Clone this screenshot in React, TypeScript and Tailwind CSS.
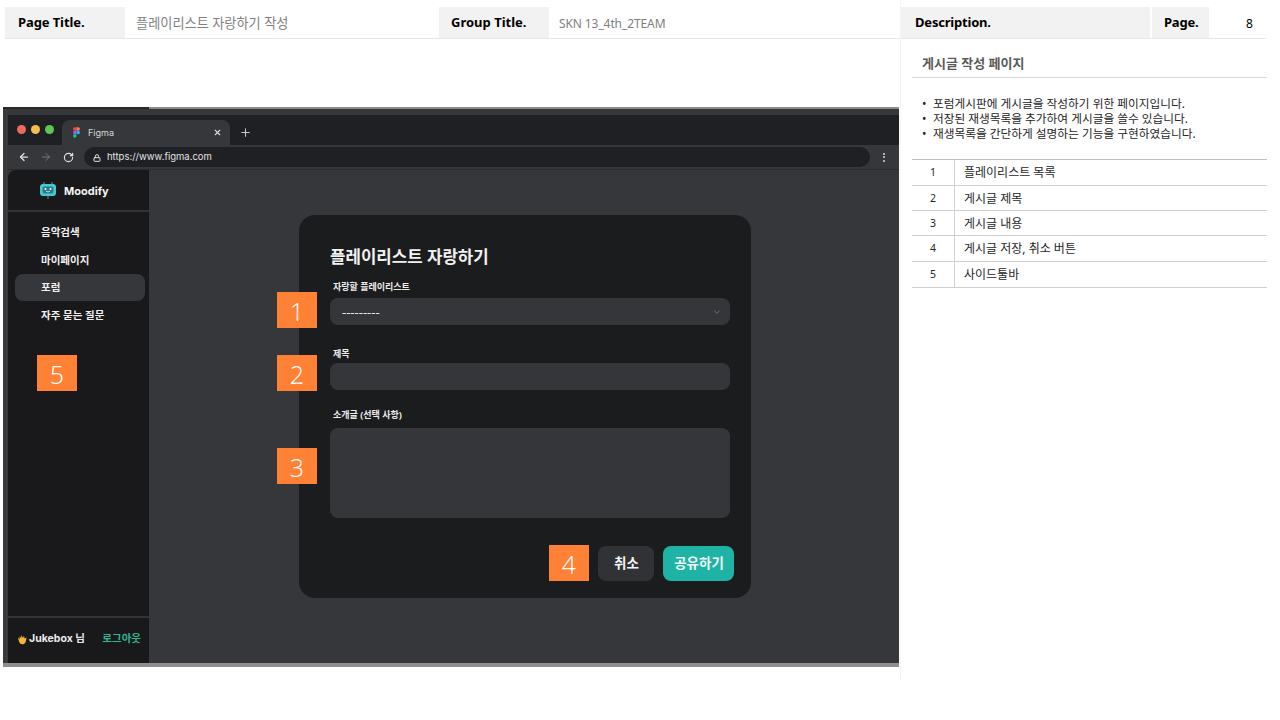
import { ArrowLeft, ArrowRight, ChevronDown, Lock, Plus, RotateCw, X } from 'lucide-react';

const rows = [
  { no: 1, text: '플레이리스트 목록', h: 'h-[26px]' },
  { no: 2, text: '게시글 제목', h: 'h-[25px]' },
  { no: 3, text: '게시글 내용', h: 'h-[25px]' },
  { no: 4, text: '게시글 저장, 취소 버튼', h: 'h-[26px]' },
  { no: 5, text: '사이드툴바', h: 'h-[26px]' },
];

const menus = ['음악검색', '마이페이지', '포럼', '자주 묻는 질문'];

const bullets = [
  '포럼게시판에 게시글을 작성하기 위한 페이지입니다.',
  '저장된 재생목록을 추가하여 게시글을 쓸수 있습니다.',
  '재생목록을 간단하게 설명하는 기능을 구현하였습니다.',
];

const Badge = ({ label, className }: { label: string; className: string }) => (
  <div className={`absolute w-10 h-9 bg-[#fe8135] text-[#fff7ef] text-[25px] font-light leading-[38px] text-center ${className}`}>
    {label}
  </div>
);

const FigmaIcon = () => (
  <svg width="7" height="11" viewBox="0 0 8 12">
    <path d="M4 0H2a2 2 0 0 0 0 4h2z" fill="#f24e1e" />
    <path d="M4 0h2a2 2 0 0 1 0 4H4z" fill="#ff7262" />
    <path d="M4 4H2a2 2 0 0 0 0 4h2z" fill="#a259ff" />
    <circle cx="6" cy="6" r="2" fill="#1abcfe" />
    <path d="M4 8H2a2 2 0 1 0 2 2z" fill="#0acf83" />
  </svg>
);

const RobotLogo = () => (
  <svg width="18" height="20" viewBox="0 0 18 20">
    <path d="M5 3V1M13 3V1" stroke="#3f8f96" strokeWidth="1.2" />
    <rect x="1" y="3" width="16" height="12" rx="3" fill="#4cc6d0" />
    <rect x="3.5" y="5.5" width="11" height="7" rx="2" fill="#2a7c86" />
    <circle cx="6.5" cy="8" r="1" fill="#e6fbfc" />
    <circle cx="11.5" cy="8" r="1" fill="#e6fbfc" />
    <path d="M7 10.3q2 1.2 4 0" stroke="#e6fbfc" strokeWidth="0.7" fill="none" />
    <path d="M9 15v3" stroke="#2f6d75" strokeWidth="1.6" />
  </svg>
);

const WaveHand = () => (
  <svg width="11" height="11" viewBox="0 0 11 11">
    <path d="M1 3.5 3 5 2.5 2 4.2 4 4.4 1 6 4 7 1.8 7.6 4.6 9.6 3.6 8.8 7.5Q8 10.500 5 10.300 2.800 10 2 7.500Z" fill="#f2b53c" />
  </svg>
);

const App = () => {
  return (
    <div className="relative w-[1280px] h-[720px] bg-white overflow-hidden flex font-['Noto_Sans','Noto_Sans_CJK_KR',sans-serif]">
      {/* left: header + captured screen */}
      <div className="w-[900px] shrink-0">
        <div className="flex h-[32px] mt-[7px] ml-[5px] border-b border-[#e8e8e8]">
          <div className="w-[120px] bg-[#f2f2f2] pl-[13px] text-[13px] font-bold tracking-[-0.1px] leading-[31px] text-black">Page Title.</div>
          <div className="w-[314px] pl-[11px] text-[13.200px] leading-[33px] text-[#7f7f7f]">플레이리스트 자랑하기 작성</div>
          <div className="w-[110px] bg-[#f2f2f2] pl-[12px] text-[13px] font-bold leading-[31px] text-black">Group Title.</div>
          <div className="flex-1 pl-[10px] text-[12px] tracking-[-0.1px] leading-[33px] text-[#7f7f7f]">SKN 13_4th_2TEAM</div>
        </div>

        <div className="ml-[3px] mt-[68px] w-[896px] h-[560px] flex flex-col bg-[#36373b] border-b-4 border-b-[#8f8f90]">
          <div className="h-[2px] flex shrink-0">
            <div className="w-[146px] bg-[#2a2a2b]" />
            <div className="flex-1 bg-[#8a8a8b]" />
          </div>
          <div className="flex-1 min-h-0 flex flex-col border-l-[5px] border-l-[#3a3a3c]">
            {/* tab strip */}
            <div className="h-[6px] bg-[#36373b]" />
            <div className="h-[30px] bg-[#1f2023] flex items-end">
              <div className="w-[54px] h-full flex items-center gap-[5px] pl-[9px] pb-[1px]">
                <span className="w-[9px] h-[9px] rounded-full bg-[#ee6a5f]" />
                <span className="w-[9px] h-[9px] rounded-full bg-[#f5bd4f]" />
                <span className="w-[9px] h-[9px] rounded-full bg-[#61c454]" />
              </div>
              <div className="w-[168px] h-[25px] bg-[#36373b] rounded-t-lg flex items-center pl-[11px] pr-[8px]">
                <FigmaIcon />
                <span className="ml-[8px] text-[9px] text-[#d8d8da] font-['Inter',sans-serif]">Figma</span>
                <X size={9} strokeWidth={3} className="ml-auto text-[#dcdcde]" />
              </div>
              <Plus size={13} className="ml-[9px] mb-[6px] text-[#c8c8ca]" />
            </div>
            {/* address bar */}
            <div className="h-[25px] bg-[#36373b] flex items-center pl-[10px] border-b border-[#2a2b2e]">
              <ArrowLeft size={12} strokeWidth={2.5} className="text-[#e2e2e4]" />
              <ArrowRight size={12} strokeWidth={2} className="ml-[10px] text-[#77787c]" />
              <RotateCw size={11} strokeWidth={2.5} className="ml-[11px] text-[#e2e2e4]" />
              <div className="ml-[10px] w-[786px] h-[20px] rounded-full bg-[#1f2023] flex items-center pl-[9px] pt-[1px]">
                <Lock size={8} strokeWidth={3} className="text-[#e2e2e4]" />
                <span className="ml-[6px] text-[9.500px] text-[#e2e2e4] font-['Inter',sans-serif]">https://www.figma.com</span>
              </div>
              <div className="ml-[13px] flex flex-col gap-[1.500px]">
                <span className="w-[2px] h-[2px] rounded-full bg-[#d8d8da]" />
                <span className="w-[2px] h-[2px] rounded-full bg-[#d8d8da]" />
                <span className="w-[2px] h-[2px] rounded-full bg-[#d8d8da]" />
              </div>
            </div>

            <div className="flex-1 flex min-h-0">
              {/* sidebar */}
              <aside className="w-[141px] shrink-0 bg-[#19181a] rounded-tl-lg flex flex-col">
                <div className="h-[42px] flex items-center pl-[31px] pt-[2px] gap-[7px] border-b-2 border-[#343436]">
                  <RobotLogo />
                  <span className="text-[11px] font-bold text-[#f4f4f4] font-['Inter',sans-serif]">Moodify</span>
                </div>
                <nav className="pl-[7px] pr-[4px] pt-[7px] flex flex-col gap-[0.500px]">
                  {menus.map((m) => (
                    <div
                      key={m}
                      className={`h-[27px] rounded-lg pl-[26px] text-[10.500px] font-bold leading-[27px] text-[#f0f0f0] ${m === '포럼' ? 'bg-[#36373b]' : ''}`}
                    >
                      {m}
                    </div>
                  ))}
                </nav>
                <div className="mt-auto h-[47px] border-t-2 border-[#343436] flex items-center pl-[9px] pr-[8px] pb-[3px]">
                  <WaveHand />
                  <span className="ml-[1px] text-[10.500px] font-bold text-[#ececec] font-['Inter','Noto_Sans_CJK_KR',sans-serif]">Jukebox 님</span>
                  <span className="ml-auto text-[10.500px] font-bold text-[#2fb893]">로그아웃</span>
                </div>
              </aside>

              {/* form */}
              <main className="flex-1 min-w-0 pl-[150px] pt-[45px]">
                <div className="w-[452px] h-[383px] bg-[#1b1c1e] rounded-2xl px-[31px] pt-[28px]">
                  <h1 className="text-[16.800px] font-bold leading-[28px] text-[#f2f2f2]">플레이리스트 자랑하기</h1>
                  <label className="block mt-[9px] ml-[3px] text-[9px] font-bold leading-[14px] text-[#ececec]">자랑할 플레이리스트</label>
                  <div className="mt-[4px] w-[400px] h-[27px] rounded-lg bg-[#35363a] flex items-center pl-[12px] pr-[8px]">
                    <span className="text-[13px] leading-[20px] text-[#e6e6e6]">---------</span>
                    <ChevronDown size={10} strokeWidth={2} className="ml-auto text-[#77787c]" />
                  </div>
                  <label className="block mt-[22px] ml-[3px] text-[9px] font-bold leading-[14px] text-[#ececec]">제목</label>
                  <div className="mt-[2px] w-[400px] h-[27px] rounded-lg bg-[#35363a]" />
                  <label className="block mt-[18px] ml-[3px] text-[9px] font-bold leading-[14px] text-[#ececec]">소개글 (선택 사항)</label>
                  <div className="mt-[6px] w-[400px] h-[90px] rounded-lg bg-[#35363a]" />
                  <div className="mt-[28px] flex gap-[9px] justify-end w-[404px]">
                    <div className="w-[56px] h-[35px] rounded-lg bg-[#313236] pl-[1px] text-center text-[13.500px] font-bold leading-[35px] text-[#f4f4f4]">취소</div>
                    <div className="w-[71px] h-[35px] rounded-lg bg-[#1eb3a5] pl-[1px] text-center text-[13.500px] font-bold leading-[35px] text-[#eefaf8]">공유하기</div>
                  </div>
                </div>
              </main>
            </div>
          </div>
        </div>
      </div>

      {/* right: description */}
      <div className="w-[366px] shrink-0 h-[680px] border-l border-[#f4f4f4]">
        <div className="flex h-[32px] mt-[7px] border-b border-[#e8e8e8]">
          <div className="w-[249px] bg-[#f2f2f2] pl-[14px] text-[13px] font-bold tracking-[-0.2px] leading-[31px] text-black">Description.</div>
          <div className="ml-[2px] w-[57px] bg-[#f2f2f2] pl-[12px] text-[13px] font-bold tracking-[-0.2px] leading-[31px] text-black">Page.</div>
          <div className="pl-[37px] text-[12px] leading-[34px] text-black">8</div>
        </div>

        <div className="ml-[11px] w-[355px]">
          <h2 className="h-[39px] border-b border-[#d9d9d9] pl-[10px] pt-[14px] text-[13px] font-bold leading-[20px] text-[#595959]">게시글 작성 페이지</h2>
          <ul className="mt-[18px] pl-[10px]">
            {bullets.map((b) => (
              <li key={b} className="flex text-[11.700px] leading-[15px] text-[#262626]">
                <span className="w-[11px]">•</span>
                {b}
              </li>
            ))}
          </ul>
          <div className="mt-[18px] border-t border-[#bfbfbf]">
            {rows.map((r) => (
              <div key={r.no} className={`flex ${r.h} border-b border-[#d0d0d0] text-[12px] leading-[25px] text-[#262626]`}>
                <div className="w-[43px] border-r border-[#d0d0d0] text-center text-[10.500px]">{r.no}</div>
                <div className="pl-[9px]">{r.text}</div>
              </div>
            ))}
          </div>
        </div>
      </div>

      <Badge label="1" className="left-[277px] top-[292px]" />
      <Badge label="2" className="left-[277px] top-[355px]" />
      <Badge label="3" className="left-[277px] top-[448px]" />
      <Badge label="4" className="left-[549px] top-[545px]" />
      <Badge label="5" className="left-[37px] top-[355px]" />
    </div>
  );
};

export default App;
